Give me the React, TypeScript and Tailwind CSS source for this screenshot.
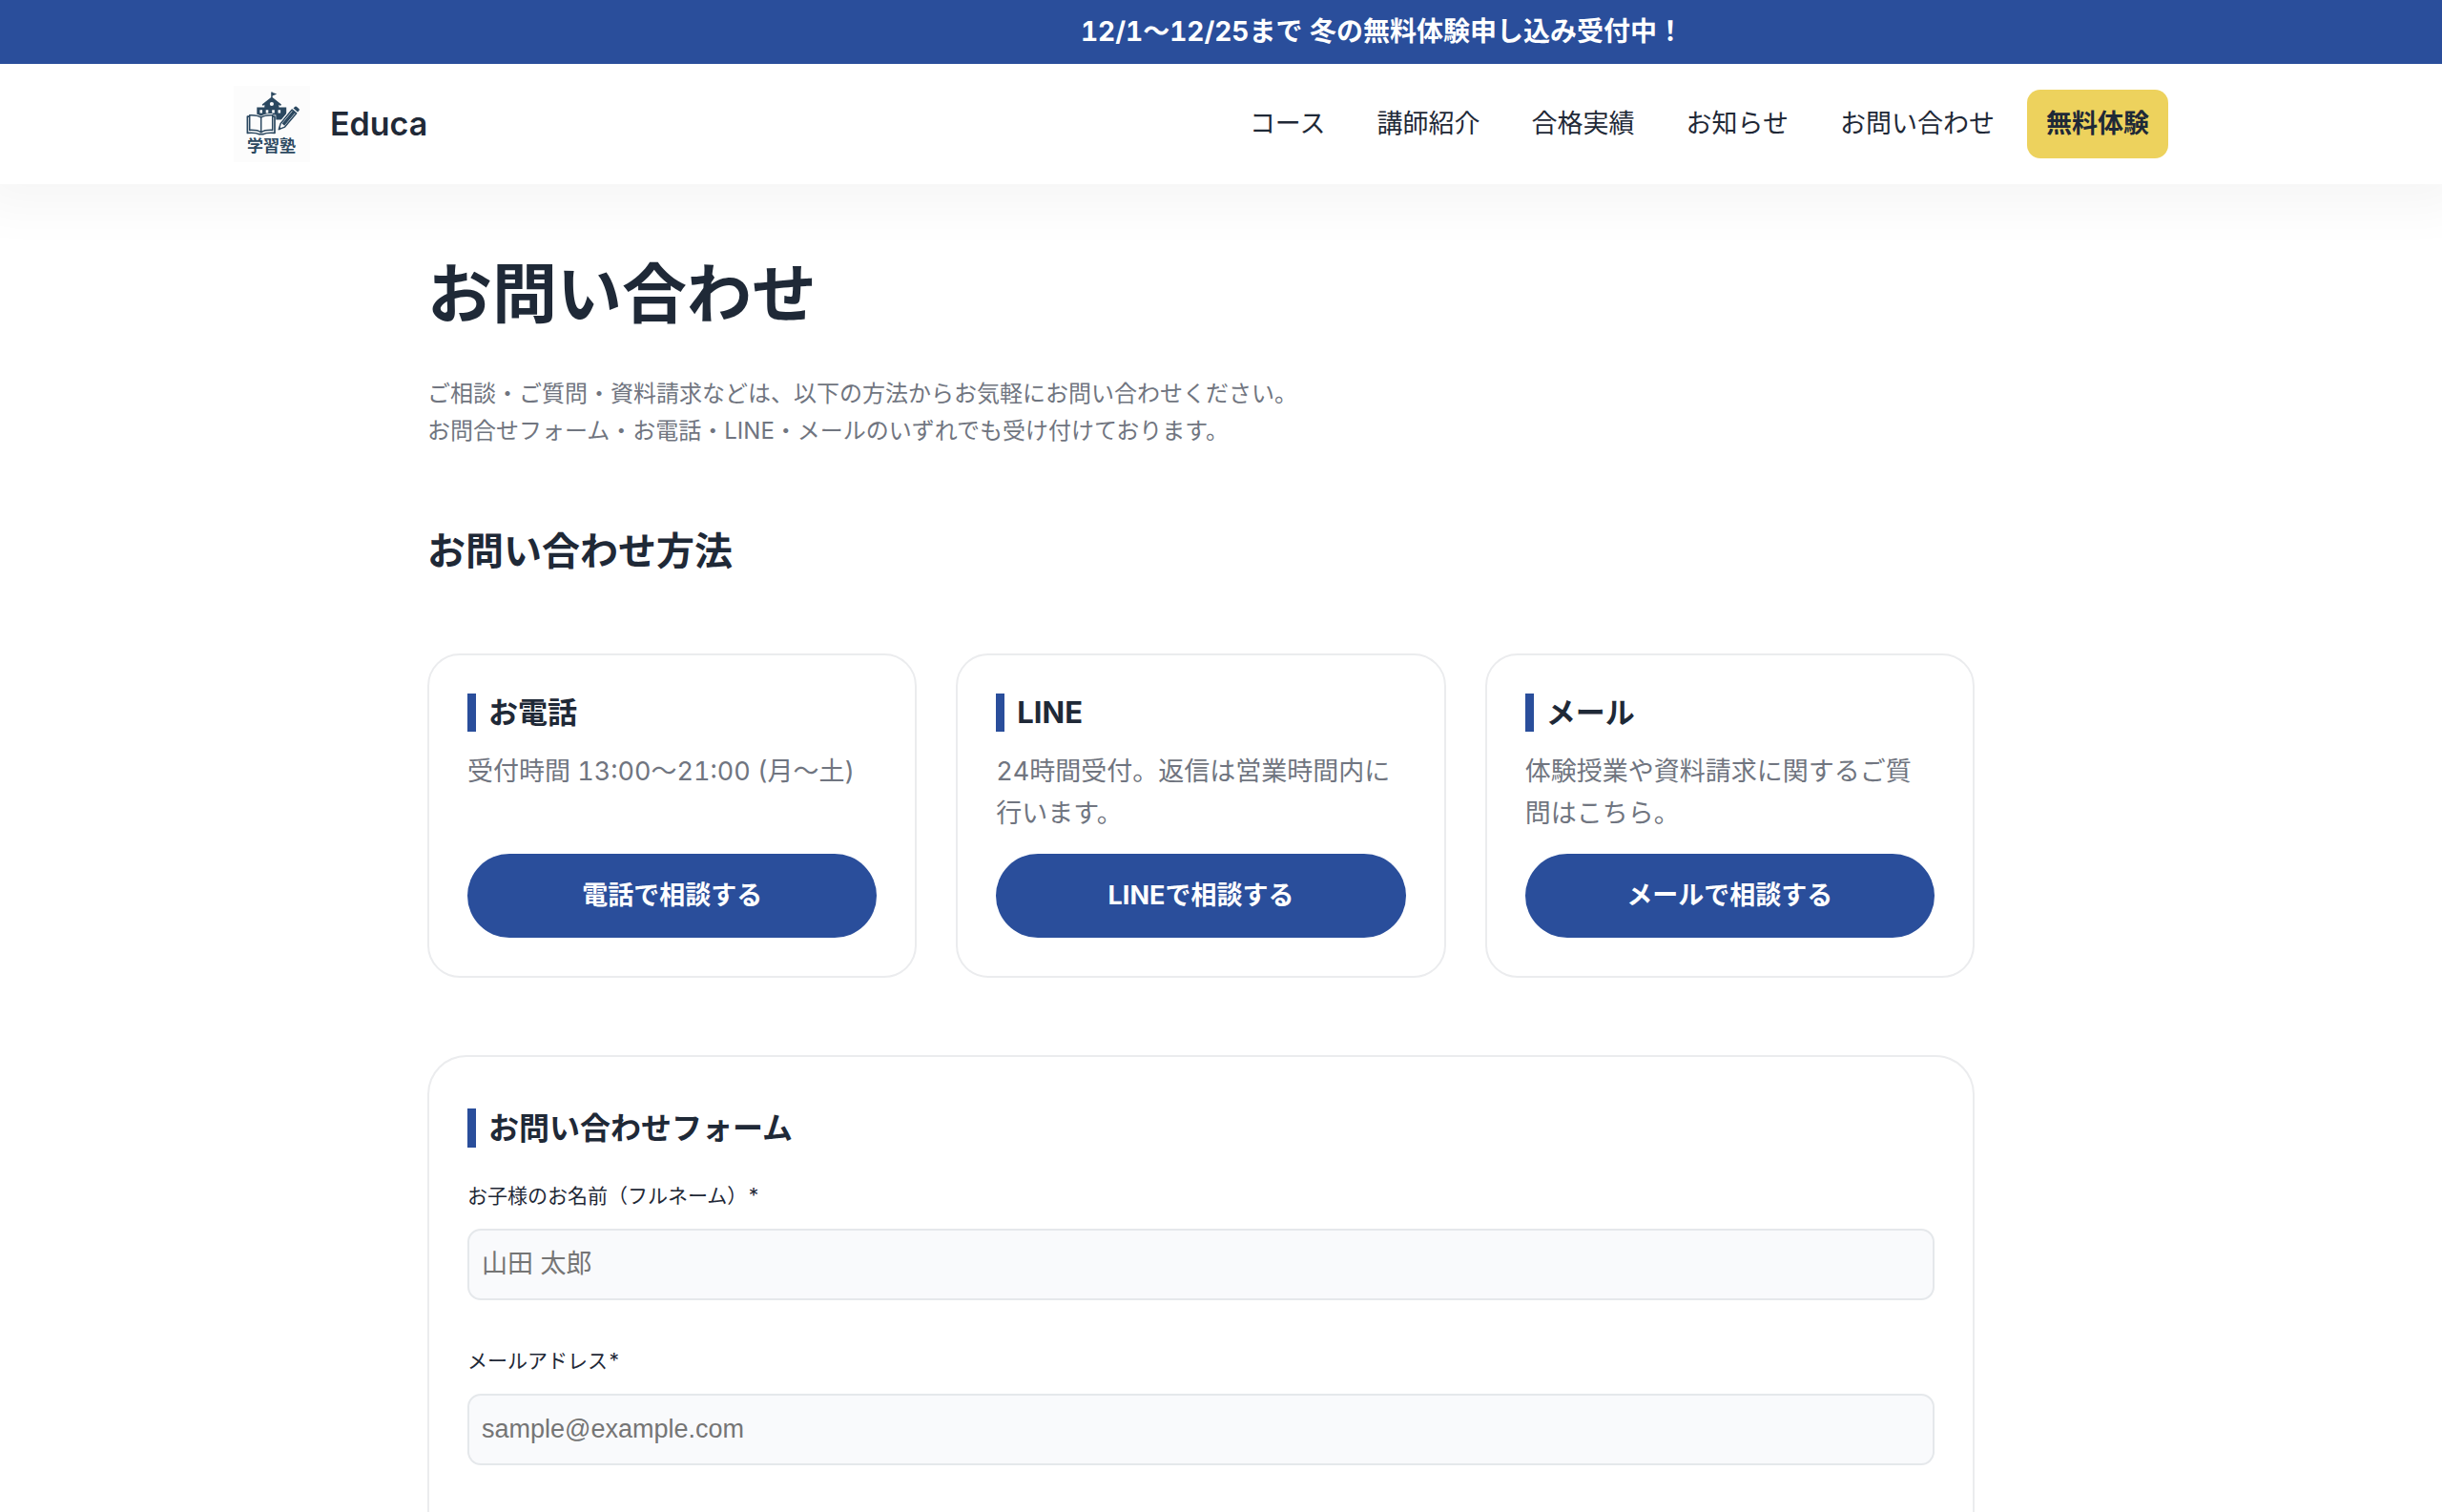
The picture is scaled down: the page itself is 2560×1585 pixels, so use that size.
import React from "react";

const navItems = ["コース", "講師紹介", "合格実績", "お知らせ", "お問い合わせ"];

const methods = [
  { title: "お電話", text: "受付時間 13:00〜21:00 (月〜土)", action: "電話で相談する" },
  { title: "LINE", text: "24時間受付。返信は営業時間内に行います。", action: "LINEで相談する" },
  { title: "メール", text: "体験授業や資料請求に関するご質問はこちら。", action: "メールで相談する" },
];

const fields = [
  { id: "child-name", label: "お子様のお名前（フルネーム）*", type: "text", placeholder: "山田 太郎" },
  { id: "email", label: "メールアドレス*", type: "email", placeholder: "sample@example.com" },
];

function Logo() {
  return (
    <svg viewBox="0 0 80 80" className="size-20 shrink-0 bg-[#fcfcfc]" role="img" aria-label="学習塾">
      <g fill="#2b4860">
        <path d="M39.200 6.500h1.400v5.500h-1.400z" />
        <path d="M40 6.700l5.200 1.900-5.200 2.200z" />
        <path d="M39.900 11.400L50 19.600l-1 1.300-1.600-1.200V22.500H55.200v13H24.300v-13h8v-2.800l-1.600 1.200-1-1.300z" />
      </g>
      <g fill="#fcfcfc">
        <circle cx="39.900" cy="19" r="2.100" />
        <path d="M27.400 25.200h2.600v3.200h-2.600zM33.700 25.200h2.600v3.200h-2.600zM40.200 25.200h2.600v3.200h-2.600zM46.500 25.200h2.600v3.200h-2.600z" />
      </g>
      <path
        d="M28.700 33.600c-2.500-2.300-6-3.200-10.400-3.100v1.700h-3.600v17.400c5.400-.5 10-.2 12.400 1.200h3.200c2.400-1.400 7-1.700 12.400-1.200V32.200h-3.600v-1.700c-4.400-.1-7.900.8-10.400 3.100z"
        fill="#fcfcfc"
        stroke="#fcfcfc"
        strokeWidth="3.200"
      />
      <path
        d="M28.700 33.200c-2.600-2-6.400-2.800-12-2.500v15.700c5.600-.2 9.500.5 12 2.300 2.500-1.800 6.400-2.500 12-2.300V30.700c-5.600-.3-9.400.5-12 2.500zM28.700 33.200v15.500"
        fill="none"
        stroke="#2b4860"
        strokeWidth="1.500"
        strokeLinejoin="round"
      />
      <path
        d="M16.700 32.200h-2.300v17.200c5.400-.4 9.600-.2 12.400 1.300h3.800c2.800-1.500 7-1.700 12.400-1.300V32.200h-2.300"
        fill="none"
        stroke="#2b4860"
        strokeWidth="1.700"
        strokeLinejoin="round"
      />
      <path d="M46.500 46.400l2-7 13.600-16.200 6.500 5.200-13.900 16.100z" fill="#fcfcfc" stroke="#fcfcfc" strokeWidth="3" />
      <path
        d="M47.300 45.600l1.900-6.200 12-14.300 4.500 3.700-12.100 14.300z"
        fill="#fcfcfc"
        stroke="#2b4860"
        strokeWidth="1.500"
        strokeLinejoin="round"
      />
      <path d="M51.900 40.600l11.500-13.700" stroke="#2b4860" strokeWidth="3.200" />
      <path d="M47 46l.9-3.200 2.200 1.900z" fill="#2b4860" />
      <path d="M62.500 23.600l1.500-1.700q.8-.9 1.800-.1l2.600 2.100q1 .9.200 1.800l-1.500 1.700z" fill="#2b4860" />
      <text x="14" y="69" fontSize="17" fontWeight="700" fill="#2b4860">
        学習塾
      </text>
    </svg>
  );
}

export default function App() {
  return (
    <div className="flex min-h-screen flex-col bg-white font-['Inter','Noto_Sans_CJK_JP',sans-serif] text-[27px] leading-[44px] text-[#1f2937] tabular-nums">
      <div className="relative z-10 overflow-hidden bg-[#2a4e9b] py-[10px] pl-[338px] text-center text-[28px] leading-[47px] font-bold whitespace-nowrap text-white">
        12/1〜12/25まで 冬の無料体験申し込み受付中！
      </div>

      <header className="bg-white pr-[82px] pl-10 shadow-[0_0_50px_25px_rgba(0,0,0,0.04)]">
        <div className="mx-auto flex h-[126px] max-w-[2028px] items-center justify-between">
          <a href="#" className="flex items-center gap-[21px]">
            <Logo />
            <span className="text-[34px] font-semibold">Educa</span>
          </a>
          <nav className="flex items-center gap-[34px]">
            <ul className="flex items-center gap-[54px]">
              {navItems.map((item) => (
                <li key={item}>
                  <a href="#">{item}</a>
                </li>
              ))}
            </ul>
            <a href="#" className="rounded-[14px] bg-[#edd25d] px-5 py-[14px] font-bold">
              無料体験
            </a>
          </nav>
        </div>
      </header>

      <div className="flex flex-1 flex-col pr-[42px]">
        <main className="mx-auto flex w-full max-w-[1622px] flex-1 flex-col pt-[74px]">
          <h1 className="text-[68px] leading-[82px] font-bold">お問い合わせ</h1>
          <p className="mt-11 text-[24px] leading-[39px] text-[#707580]">
            ご相談・ご質問・資料請求などは、以下の方法からお気軽にお問い合わせください。
            <br />
            お問合せフォーム・お電話・LINE・メールのいずれでも受け付けております。
          </p>

          <h2 className="mt-[81px] text-[40px] leading-[52px] font-bold">お問い合わせ方法</h2>
          <div className="mt-[81px] grid grid-cols-3 gap-[41px]">
            {methods.map((m) => (
              <section key={m.title} className="flex flex-col rounded-[34px] border-2 border-[#ebecee] p-10">
                <h3 className="border-l-[9px] border-[#2a4e9b] pl-[13px] text-[31px] leading-10 font-bold">{m.title}</h3>
                <p className="mt-5 mb-5 text-[#707580]">{m.text}</p>
                <button type="button" className="mt-auto h-[88px] rounded-full bg-[#2a4e9b] font-bold text-white">
                  {m.action}
                </button>
              </section>
            ))}
          </div>

          <form className="mt-[81px] flex-1 rounded-t-[41px] border-2 border-b-0 border-[#ebecee] px-10 pt-[54px]">
            <h2 className="border-l-[9px] border-[#2a4e9b] pl-[13px] text-[32px] leading-[41px] font-bold">
              お問い合わせフォーム
            </h2>
            <div className="mt-[35px] flex flex-col gap-12">
              {fields.map((f) => (
                <div key={f.id} className="flex flex-col gap-[18px]">
                  <label htmlFor={f.id} className="text-[21px] leading-8">
                    {f.label}
                  </label>
                  <input
                    id={f.id}
                    type={f.type}
                    placeholder={f.placeholder}
                    className="h-[75px] w-full rounded-[14px] border-2 border-[#e5e8eb] bg-[#f9fafc] px-[13px] font-['Liberation_Sans','Noto_Sans_CJK_JP',sans-serif] placeholder:text-[#757575]"
                  />
                </div>
              ))}
            </div>
          </form>
        </main>
      </div>
    </div>
  );
}
